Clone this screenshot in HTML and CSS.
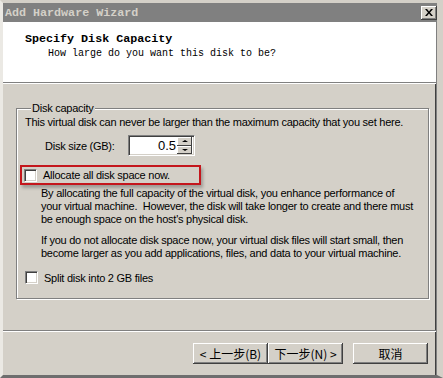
FILE: index.html
```html
<!DOCTYPE html>
<html lang="en">

<head>
    <meta charset="UTF-8">
    <title>Add Hardware Wizard</title>
    <link rel="stylesheet" href="styles.css">
</head>

<body>
    <div class="window">
        <div class="titlebar">
            <span class="title">Add Hardware Wizard</span>
            <span class="close-btn">
                <svg width="8" height="7" viewBox="0 0 8 7">
                    <path d="M0 0h2l2 2.5L6 0h2L5 3.5 8 7H6L4 4.5 2 7H0l3-3.5z" fill="#000" />
                </svg>
            </span>
        </div>

        <!-- wizard header -->
        <div class="header">
            <div class="header-title">Specify Disk Capacity</div>
            <div class="header-sub">How large do you want this disk to be?</div>
        </div>

        <div class="content">
            <fieldset class="group">
                <legend>Disk capacity</legend>
                <p class="intro">This virtual disk can never be larger than the maximum capacity that you set here.</p>

                <div class="size-row">
                    <span class="size-label">Disk size (GB):</span>
                    <div class="spin">
                        <span class="spin-value">0.5</span>
                        <div class="spin-btns">
                            <span class="spin-btn"><i class="arrow up"></i></span>
                            <span class="spin-btn"><i class="arrow down"></i></span>
                        </div>
                    </div>
                </div>

                <div class="highlight">
                    <label class="check"><span class="box"></span>Allocate all disk space now.</label>
                </div>

                <div class="desc">
                    <p>By allocating the full capacity of the virtual disk, you enhance performance of<br>your virtual machine.&nbsp; However, the disk will take longer to create and there must<br>be enough space on the host's physical disk.</p>
                    <p>If you do not allocate disk space now, your virtual disk files will start small, then<br>become larger as you add applications, files, and data to your virtual machine.</p>
                </div>

                <label class="check split"><span class="box"></span>Split disk into 2 GB files</label>
            </fieldset>
        </div>

        <div class="footer">
            <button class="btn back">&lt; 上一步(B)</button>
            <button class="btn next">下一步(N) &gt;</button>
            <button class="btn cancel">取消</button>
        </div>
    </div>
</body>

</html>
```

FILE: styles.css
```css
body {
    margin: 0;
    padding: 0;
    background: #d4d0c8;
    font-family: 'Liberation Sans', Arial, sans-serif;
    font-size: 11px;
    letter-spacing: -0.25px;
    color: #000;
}

* {
    box-sizing: border-box;
}

/* outer window frame */
.window {
    width: 443px;
    height: 378px;
    display: flex;
    flex-direction: column;
    background: #d4d0c8;
    border-top: 3px solid #d4d0c8;
    border-left: 3px solid #ebe9e4;
    border-right: 6px solid #d4d0c8;
    border-bottom: 3px solid #6e6e6e;
    box-shadow: inset -1px 0 #808080, inset -2px 0 #404040;
}

.titlebar {
    height: 19px;
    background: #808080;
    display: flex;
    align-items: center;
    justify-content: space-between;
    padding: 0 0 0 2px;
}

.title {
    font-family: 'Liberation Mono', monospace;
    font-weight: bold;
    font-size: 11.7px;
    color: #d4d0c8;
    letter-spacing: 0;
}

.close-btn {
    width: 16px;
    height: 14px;
    background: #d4d0c8;
    display: flex;
    align-items: center;
    justify-content: center;
    box-shadow: inset -1px -1px #404040, inset 1px 1px #fff, inset -2px -2px #808080;
}

.header {
    height: 61px;
    background: #fff;
    padding: 10px 0 0 22px;
    border-bottom: 1px solid #808080;
    box-shadow: 0 1px #fff;
    margin-right: 1px;
    letter-spacing: 0;
}

.header-title {
    font-family: 'Liberation Mono', monospace;
    font-weight: bold;
    font-size: 11.7px;
    height: 15px;
}

.header-sub {
    font-family: 'Liberation Mono', monospace;
    font-size: 10px;
    padding-left: 23px;
    margin-top: 1px;
}

.content {
    flex: 1;
    padding: 18px 8px 0 13px;
    margin-top: 1px;
}

.group {
    margin: 0;
    padding: 0 8px 0 8px;
    height: 197px;
    border: 1px solid #808080;
    box-shadow: inset 1px 1px #fff, 1px 1px #fff;
}

.group legend {
    padding: 0 1px;
    margin-left: 6px;
    background: #d4d0c8;
    line-height: 13px;
}

.group p {
    margin: 0;
}

.intro {
    margin-top: 1px !important;
}

.size-row {
    display: flex;
    align-items: center;
    margin-top: 7px;
    padding-left: 20px;
}

.size-label {
    width: 83px;
}

.spin {
    width: 67px;
    height: 21px;
    background: #fff;
    display: flex;
    align-items: center;
    border-top: 1px solid #808080;
    border-left: 1px solid #808080;
    border-right: 1px solid #fff;
    border-bottom: 1px solid #fff;
    box-shadow: inset 1px 1px #404040, inset -1px -1px #d4d0c8;
    padding: 2px 2px 2px 2px;
}

.spin-value {
    flex: 1;
    text-align: right;
    font-size: 13px;
    letter-spacing: 0;
    padding-right: 1px;
}

.spin-btns {
    display: flex;
    flex-direction: column;
    width: 15px;
    height: 17px;
}

.spin-btn {
    flex: 1;
    background: #d4d0c8;
    display: flex;
    align-items: center;
    justify-content: center;
    box-shadow: inset -1px -1px #404040, inset 1px 1px #fff;
}

.arrow {
    width: 0;
    height: 0;
    border-left: 3px solid transparent;
    border-right: 3px solid transparent;
}

.arrow.up {
    border-bottom: 2px solid #000;
}

.arrow.down {
    border-top: 2px solid #000;
}

/* red highlight drawn over the first option */
.highlight {
    width: 181px;
    height: 20px;
    margin: 9px 0 0 -5px;
    border: 2px solid #c4161c;
    box-shadow: 2px 3px 3px rgba(0, 0, 0, 0.25);
    display: flex;
    align-items: center;
    padding-left: 2px;
}

.check {
    display: flex;
    align-items: center;
}

.box {
    width: 13px;
    height: 13px;
    background: #fff;
    margin-right: 6px;
    border-top: 1px solid #808080;
    border-left: 1px solid #808080;
    border-right: 1px solid #fff;
    border-bottom: 1px solid #fff;
    box-shadow: inset 1px 1px #404040, inset -1px -1px #d4d0c8;
}

.desc {
    padding-left: 16px;
    margin-top: 2px;
    line-height: 13px;
    white-space: nowrap;
}

.desc p + p {
    margin-top: 8px;
}

.split {
    margin-top: 11px;
}

.footer {
    height: 45px;
    border-top: 1px solid #808080;
    box-shadow: inset 0 1px #fff;
    display: flex;
    justify-content: flex-end;
    padding: 12px 8px 0 0;
    margin-right: 1px;
}

.btn {
    width: 75px;
    height: 21px;
    background: #d4d0c8;
    border: none;
    padding: 0;
    font-family: 'Noto Sans CJK SC', sans-serif;
    font-size: 12px;
    color: #000;
    box-shadow: inset -1px -1px #404040, inset 1px 1px #fff, inset -2px -2px #808080;
}

.cancel {
    margin-left: 10px;
}
```
